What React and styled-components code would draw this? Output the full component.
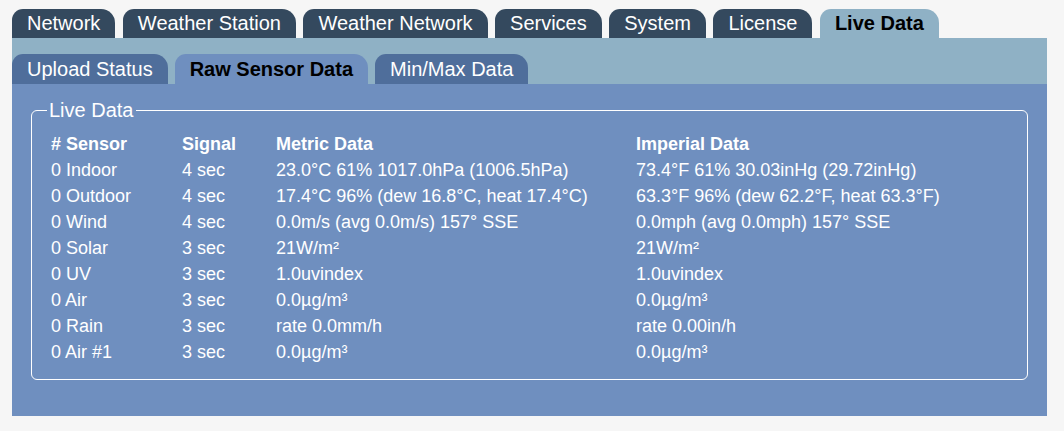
import React from 'react';
import styled, { createGlobalStyle } from 'styled-components';

const GlobalStyle = createGlobalStyle`
  body {
    margin: 0;
    background: #f6f6f6;
    font-family: "Liberation Sans", Arial, sans-serif;
  }
`;

const Page = styled.div`
  width: 1035px;
  padding: 9px 0 0 12px;
`;

const TopTabs = styled.div`
  display: flex;
  gap: 7.5px;
`;

const TopTab = styled.div`
  height: 29px;
  line-height: 29px;
  padding: 0 15px;
  font-size: 20px;
  border-radius: 11px 14px 0 0;
  background: ${(p) => (p.$active ? '#8fb1c5' : '#34495e')};
  color: ${(p) => (p.$active ? '#000' : '#fff')};
  font-weight: ${(p) => (p.$active ? 700 : 400)};
  white-space: nowrap;
`;

const SubBar = styled.div`
  display: flex;
  gap: 7px;
  padding-top: 16px;
  background: #8fb1c5;
`;

const SubTab = styled.div`
  height: 30px;
  line-height: 30px;
  padding: 0 15px;
  font-size: 20px;
  border-radius: 11px 14px 0 0;
  background: ${(p) => (p.$active ? '#6f8fbf' : '#4f6e9b')};
  color: ${(p) => (p.$active ? '#000' : '#fff')};
  font-weight: ${(p) => (p.$active ? 700 : 400)};
  white-space: nowrap;
`;

const Panel = styled.div`
  background: #6f8fbf;
  padding: 15px 19px 36px;
`;

const Fieldset = styled.fieldset`
  margin: 0;
  border: 1px solid #fff;
  border-radius: 6px;
  padding: 9px 19px 14px;
  color: #fff;
`;

const Legend = styled.legend`
  margin-left: -4px;
  padding: 0 2px;
  font-size: 20px;
  line-height: 23px;
  color: #fff;
`;

const Row = styled.div`
  display: grid;
  grid-template-columns: 131px 94px 360px 1fr;
  font-size: 18px;
  line-height: 26px;
  font-weight: ${(p) => (p.$head ? 700 : 400)};
  white-space: nowrap;
`;

const topTabs = ['Network', 'Weather Station', 'Weather Network', 'Services', 'System', 'License', 'Live Data'];
const subTabs = ['Upload Status', 'Raw Sensor Data', 'Min/Max Data'];

const rows = [
  ['0 Indoor', '4 sec', '23.0°C 61% 1017.0hPa (1006.5hPa)', '73.4°F 61% 30.03inHg (29.72inHg)'],
  ['0 Outdoor', '4 sec', '17.4°C 96% (dew 16.8°C, heat 17.4°C)', '63.3°F 96% (dew 62.2°F, heat 63.3°F)'],
  ['0 Wind', '4 sec', '0.0m/s (avg 0.0m/s) 157° SSE', '0.0mph (avg 0.0mph) 157° SSE'],
  ['0 Solar', '3 sec', '21W/m²', '21W/m²'],
  ['0 UV', '3 sec', '1.0uvindex', '1.0uvindex'],
  ['0 Air', '3 sec', '0.0µg/m³', '0.0µg/m³'],
  ['0 Rain', '3 sec', 'rate 0.0mm/h', 'rate 0.00in/h'],
  ['0 Air #1', '3 sec', '0.0µg/m³', '0.0µg/m³'],
];

export default function App() {
  return (
    <>
      <GlobalStyle />
      <Page>
        <TopTabs>
          {topTabs.map((t) => (
            <TopTab key={t} $active={t === 'Live Data'}>{t}</TopTab>
          ))}
        </TopTabs>
        <SubBar>
          {subTabs.map((t) => (
            <SubTab key={t} $active={t === 'Raw Sensor Data'}>{t}</SubTab>
          ))}
        </SubBar>
        <Panel>
          <Fieldset>
            <Legend>Live Data</Legend>
            <Row $head>
              <span># Sensor</span>
              <span>Signal</span>
              <span>Metric Data</span>
              <span>Imperial Data</span>
            </Row>
            {rows.map((r) => (
              <Row key={r[0]}>
                {r.map((c, i) => (
                  <span key={i}>{c}</span>
                ))}
              </Row>
            ))}
          </Fieldset>
        </Panel>
      </Page>
    </>
  );
}
